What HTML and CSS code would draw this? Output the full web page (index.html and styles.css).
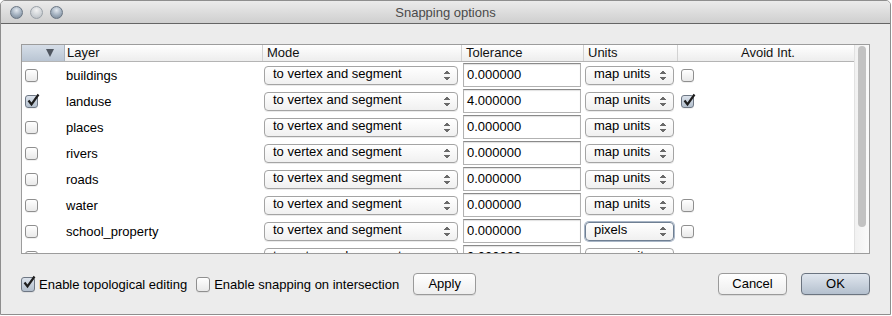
FILE: index.html
```html
<!DOCTYPE html>
<html lang="en">
<head>
    <meta charset="UTF-8">
    <title>Snapping options</title>
    <link rel="stylesheet" href="styles.css">
</head>
<body>
<div class="window">
    <div class="titlebar">
        <div class="lights"><span class="light"></span><span class="light mid"></span><span class="light"></span></div>
        <div class="title">Snapping options</div>
        <div></div>
    </div>
    <div class="content">
        <div class="table">
            <div class="main">
                <div class="row head">
                    <div class="sort"><span class="tri"></span></div>
                    <div class="hcell first">Layer</div>
                    <div class="hcell">Mode</div>
                    <div class="hcell">Tolerance</div>
                    <div class="hcell">Units</div>
                    <div class="hcell center">Avoid Int.</div>
                </div>
                <div class="rows">
                    <div class="row">
                        <div class="c-check"><span class="box"></span></div>
                        <div class="c-name">buildings</div>
                        <div class="c-mode"><div class="combo mode">to vertex and segment<span class="arrows"></span></div></div>
                        <div class="c-tol"><div class="input">0.000000</div></div>
                        <div class="c-units"><div class="combo units">map units<span class="arrows"></span></div></div>
                        <div class="c-avoid"><span class="box"></span></div>
                    </div>
                    <div class="row">
                        <div class="c-check"><span class="box checked"><svg viewBox="0 0 13 13"><path d="M2.5 6.5 L5.5 10.5 L12.5 0.5"/></svg></span></div>
                        <div class="c-name">landuse</div>
                        <div class="c-mode"><div class="combo mode">to vertex and segment<span class="arrows"></span></div></div>
                        <div class="c-tol"><div class="input">4.000000</div></div>
                        <div class="c-units"><div class="combo units">map units<span class="arrows"></span></div></div>
                        <div class="c-avoid"><span class="box checked"><svg viewBox="0 0 13 13"><path d="M2.5 6.5 L5.5 10.5 L12.5 0.5"/></svg></span></div>
                    </div>
                    <div class="row">
                        <div class="c-check"><span class="box"></span></div>
                        <div class="c-name">places</div>
                        <div class="c-mode"><div class="combo mode">to vertex and segment<span class="arrows"></span></div></div>
                        <div class="c-tol"><div class="input">0.000000</div></div>
                        <div class="c-units"><div class="combo units">map units<span class="arrows"></span></div></div>
                        <div class="c-avoid"></div>
                    </div>
                    <div class="row">
                        <div class="c-check"><span class="box"></span></div>
                        <div class="c-name">rivers</div>
                        <div class="c-mode"><div class="combo mode">to vertex and segment<span class="arrows"></span></div></div>
                        <div class="c-tol"><div class="input">0.000000</div></div>
                        <div class="c-units"><div class="combo units">map units<span class="arrows"></span></div></div>
                        <div class="c-avoid"></div>
                    </div>
                    <div class="row">
                        <div class="c-check"><span class="box"></span></div>
                        <div class="c-name">roads</div>
                        <div class="c-mode"><div class="combo mode">to vertex and segment<span class="arrows"></span></div></div>
                        <div class="c-tol"><div class="input">0.000000</div></div>
                        <div class="c-units"><div class="combo units">map units<span class="arrows"></span></div></div>
                        <div class="c-avoid"></div>
                    </div>
                    <div class="row">
                        <div class="c-check"><span class="box"></span></div>
                        <div class="c-name">water</div>
                        <div class="c-mode"><div class="combo mode">to vertex and segment<span class="arrows"></span></div></div>
                        <div class="c-tol"><div class="input">0.000000</div></div>
                        <div class="c-units"><div class="combo units">map units<span class="arrows"></span></div></div>
                        <div class="c-avoid"><span class="box"></span></div>
                    </div>
                    <div class="row">
                        <div class="c-check"><span class="box"></span></div>
                        <div class="c-name">school_property</div>
                        <div class="c-mode"><div class="combo mode">to vertex and segment<span class="arrows"></span></div></div>
                        <div class="c-tol"><div class="input">0.000000</div></div>
                        <div class="c-units"><div class="combo units focus">pixels<span class="arrows"></span></div></div>
                        <div class="c-avoid"><span class="box"></span></div>
                    </div>
                    <div class="row">
                        <div class="c-check"><span class="box"></span></div>
                        <div class="c-name">wetlands</div>
                        <div class="c-mode"><div class="combo mode">to vertex and segment<span class="arrows"></span></div></div>
                        <div class="c-tol"><div class="input">0.000000</div></div>
                        <div class="c-units"><div class="combo units">map units<span class="arrows"></span></div></div>
                        <div class="c-avoid"></div>
                    </div>
                </div>
            </div>
            <div class="scroll"><div class="thumb"></div></div>
        </div>
        <div class="footer">
            <label class="opt"><span class="box big checked"><svg viewBox="0 0 13 13"><path d="M2.5 6.5 L5.5 10.5 L12.5 0.5"/></svg></span>Enable topological editing</label>
            <label class="opt second"><span class="box big"></span>Enable snapping on intersection</label>
            <button class="btn apply">Apply</button>
            <button class="btn cancel">Cancel</button>
            <button class="btn ok">OK</button>
        </div>
    </div>
</div>
</body>
</html>
```

FILE: styles.css
```css
* {
    box-sizing: border-box;
}

body {
    margin: 0;
    background: #fff;
    font-family: "Liberation Sans", Arial, sans-serif;
    font-size: 13px;
    color: #000;
}

.window {
    width: 891px;
    height: 315px;
    border: 1px solid #8e8e8e;
    border-radius: 5px 5px 0 0;
    background: #ececec;
    overflow: hidden;
}

.titlebar {
    height: 23px;
    display: grid;
    grid-template-columns: 1fr auto 1fr;
    align-items: center;
    background: linear-gradient(#ebebeb, #cfcfcf);
    border-bottom: 1px solid #656565;
}

.lights {
    display: flex;
    gap: 7px;
    padding-left: 9px;
}

.light {
    width: 13px;
    height: 13px;
    border-radius: 50%;
    border: 1px solid #6a7684;
    background: radial-gradient(circle at 50% 30%, #e3e9f0 0, #9fadbc 55%, #74828f 100%);
}

.light.mid {
    border-color: #9aa1a8;
    background: radial-gradient(circle at 50% 30%, #f2f2f2 0, #cfd3d7 55%, #b2b7bc 100%);
}

.title {
    color: #4a4a4a;
    padding-top: 1px;
}

.content {
    padding: 20px 20px 0 20px;
}

.table {
    display: flex;
    height: 210px;
    border: 1px solid #9c9c9c;
    background: #fff;
}

.main {
    width: 832px;
    overflow: hidden;
}

.row {
    display: grid;
    grid-template-columns: 43px 197px 199px 122px 94px 177px;
    height: 26px;
    align-items: center;
}

.row.head {
    height: 17px;
    align-items: stretch;
    background: linear-gradient(#ffffff, #ededed);
    border-bottom: 1px solid #b4b4b4;
}

.sort {
    display: flex;
    justify-content: flex-end;
    align-items: center;
    padding-right: 10px;
    background: linear-gradient(#d6dee8, #b9c5d3);
    border-right: 1px solid #a9b3bf;
}

.tri {
    width: 0;
    height: 0;
    border-left: 4px solid transparent;
    border-right: 4px solid transparent;
    border-top: 8px solid #4f5660;
}

.hcell {
    line-height: 16px;
    padding-left: 4px;
    color: #111;
    border-left: 1px solid #d2d2d2;
}

.hcell.first {
    border-left: 0;
    padding-left: 2px;
}

.hcell.center {
    text-align: center;
}

.rows {
    height: 191px;
    overflow: hidden;
}

.c-check {
    padding-left: 3px;
    display: flex;
}

.c-name {
    padding-left: 1px;
}

.c-avoid {
    padding-left: 4px;
    display: flex;
}

.box {
    position: relative;
    display: inline-block;
    width: 13px;
    height: 13px;
    border: 1px solid #8f8f8f;
    border-radius: 3px;
    background: linear-gradient(#ffffff, #e9e9e9);
    box-shadow: 0 1px 0 rgba(0, 0, 0, .06);
}

.box.checked {
    background: linear-gradient(#dbe2eb, #b3bfcd);
    border-color: #6e7784;
}

.box svg {
    position: absolute;
    left: 0;
    top: -2px;
    width: 13px;
    height: 13px;
    overflow: visible;
}

.box svg path {
    fill: none;
    stroke: #1e1e1e;
    stroke-width: 2.2;
}

.box.big {
    width: 14px;
    height: 15px;
}

.combo {
    position: relative;
    height: 19px;
    line-height: 14px;
    padding-left: 8px;
    border: 1px solid #a4a4a4;
    border-radius: 4px;
    background: linear-gradient(#ffffff, #f0f0f0);
    box-shadow: 0 1px 0 rgba(0, 0, 0, .08);
    white-space: nowrap;
    overflow: hidden;
}

.combo.mode {
    margin-left: 2px;
    width: 194px;
}

.combo.units {
    margin-left: 2px;
    width: 89px;
}

.combo.focus {
    border-color: #6f7f93;
    box-shadow: 0 0 0 1px #a9b6c6;
}

.arrows {
    position: absolute;
    right: 7px;
    top: 3px;
    width: 6px;
    height: 11px;
    background:
        linear-gradient(to bottom right, transparent 50%, #6a6a6a 50%) left top / 3px 4px no-repeat,
        linear-gradient(to bottom left, transparent 50%, #6a6a6a 50%) right top / 3px 4px no-repeat,
        linear-gradient(to top right, transparent 50%, #6a6a6a 50%) left bottom / 3px 4px no-repeat,
        linear-gradient(to top left, transparent 50%, #6a6a6a 50%) right bottom / 3px 4px no-repeat;
}

.c-tol {
    align-self: stretch;
    padding: 1px 0 1px 2px;
}

.input {
    width: 118px;
    height: 24px;
    line-height: 22px;
    padding-left: 3px;
    border: 1px solid #b2b2b2;
    border-top-color: #8a8a8a;
    box-shadow: inset 0 1px 1px rgba(0, 0, 0, .12);
    background: #fff;
}

.scroll {
    width: 15px;
    border-left: 1px solid #e2e2e2;
    background: linear-gradient(to right, #f1f1f1, #fafafa);
    padding: 1px 0 0 3px;
}

.thumb {
    width: 8px;
    height: 181px;
    border-radius: 4px;
    background: #c2c2c2;
}

.footer {
    display: flex;
    align-items: center;
    height: 22px;
    margin-top: 19px;
}

.opt {
    display: flex;
    align-items: center;
    gap: 4px;
}

.opt.second {
    margin-left: 9px;
}

.btn {
    height: 22px;
    font-family: "Liberation Sans", Arial, sans-serif;
    font-size: 13px;
    color: #000;
    border: 1px solid #9a9a9a;
    border-radius: 4px;
    background: linear-gradient(#ffffff, #eeeeee);
    box-shadow: 0 1px 0 rgba(0, 0, 0, .08);
    padding: 0 0 2px;
}

.btn.apply {
    width: 63px;
    margin-left: 14px;
}

.btn.cancel {
    width: 69px;
    margin-left: auto;
}

.btn.ok {
    width: 69px;
    margin-left: 14px;
    border-color: #6b7480;
    background: linear-gradient(#e0e6ee, #b4c0ce);
}
```
